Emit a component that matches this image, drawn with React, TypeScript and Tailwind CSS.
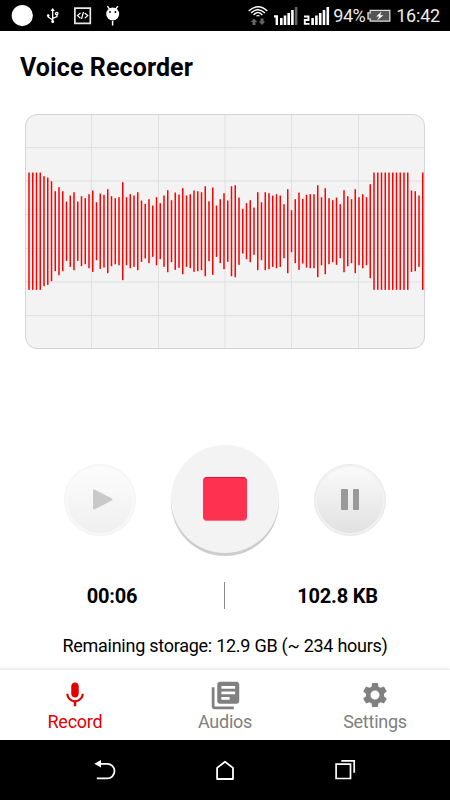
import React from 'react';
import {MdLibraryBooks, MdMic, MdSettings} from "react-icons/md";

// amplitude of every sample, 3 units per pixel above and below the center line
const samples: number[] = [
    176, 176, 176, 176, 165, 161, 150, 120, 132, 120, 89, 107, 117, 89, 105, 99, 111, 122, 87, 113,
    109, 126, 105, 99, 102, 147, 102, 111, 107, 117, 92, 82, 96, 77, 102, 84, 107, 123, 93, 116,
    110, 129, 107, 111, 122, 120, 117, 135, 90, 131, 77, 96, 114, 92, 135, 138, 101, 67, 84, 93,
    71, 117, 87, 117, 114, 107, 111, 107, 81, 126, 63, 96, 116, 97, 109, 111, 111, 138, 102, 129,
    99, 93, 101, 81, 123, 105, 96, 126, 102, 111, 102, 141, 176, 176, 176, 176, 176, 176, 176, 176,
    176, 176, 122, 120, 107, 176,
];

const tabs = [
    {name: 'Record', icon: <MdMic size={30}/>, color: "text-[#e00000]"},
    {name: 'Audios', icon: <MdLibraryBooks size={33}/>, color: "text-[#808080]"},
    {name: 'Settings', icon: <MdSettings size={30}/>, color: "text-[#808080]"},
];

function StatusBar() {
    return (
        <div className="flex h-[31px] items-center bg-black pl-[11px] pr-[10px] text-[#ececec]">
            <svg width="120" height="31" viewBox="0 0 120 31" fill="none">
                <circle cx="11.3" cy="15.6" r="10.6" fill="#fff"/>
                {/* usb */}
                <g stroke="#fff" strokeWidth="1.3">
                    <path d="M41.7 10v11M37.2 15.5v1.5l4.5 3M46 14v2.5l-4.3 2"/>
                    <path d="M41.7 8l2.2 3h-4.4z" fill="#fff" stroke="none"/>
                    <circle cx="41.7" cy="21.5" r="1.5" fill="#fff" stroke="none"/>
                    <circle cx="37.2" cy="15.5" r="1.3" fill="#fff" stroke="none"/>
                    <circle cx="45.7" cy="13.5" r="1.2"/>
                </g>
                {/* code */}
                <path d="M63.9 8.1h15.4v15.2H63.9z" stroke="#e8e8e8" strokeWidth="1.7"/>
                <path d="M69.5 13l-3 2.6 3 2.6M73.7 13l3 2.6-3 2.6M72.5 12l-2 7" stroke="#fff" strokeWidth="1.2"/>
                {/* android */}
                <circle cx="101.7" cy="14" r="6.5" fill="#fff"/>
                <path d="M96.5 6.2l2 3M106.8 6.2l-2 3M101.6 21v4.5" stroke="#fff" strokeWidth="1.5"/>
                <circle cx="99" cy="12" r=".9" fill="#000"/>
                <circle cx="104.4" cy="12" r=".9" fill="#000"/>
            </svg>
            <svg className="ml-auto" width="82" height="31" viewBox="0 0 82 31" fill="none">
                {/* wifi */}
                <path d="M.7 11Q10 2.5 19.3 11M3.1 13Q10 6.3 16.9 13M5.6 14.9Q10 10.2 14.4 14.9"
                      stroke="#fff" strokeWidth="1.4"/>
                <path d="M7.8 16.2Q10 13.7 12.2 16.2z" fill="#fff"/>
                <path d="M6 18.5l3.3 3.5H7.5v3H4.5v-3H2.7zM14 25l-3.3-3.5h1.8v-3h3v3h1.8z" fill="#666"/>
                {/* first sim */}
                <path d="M26 15.3h4V25h-2.4v-7.4H26z" fill="#fff"/>
                <path d="M32 18h2.6v7H32zM35.7 15.5h2.6V25h-2.6zM39.4 13H42v12h-2.6zM43.1 10h2.6v15h-2.6z"
                      fill="#fff"/>
                <path d="M46.8 7h2.6v18h-2.6z" fill="#666"/>
                {/* second sim */}
                <path d="M56 16.5h4.5v3.5h-3.7v3.9h4.7" stroke="#fff" strokeWidth="1.9"/>
                <path
                    d="M63.3 18h2.6v7h-2.6zM67.1 15.5h2.6V25h-2.6zM70.9 13h2.6v12h-2.6zM74.7 10h2.6v15h-2.6zM78.5 7h2.6v18h-2.6z"
                    fill="#fff"/>
            </svg>
            <span className="ml-[3.5px] w-[34px] text-[18px] tracking-[-0.4px] whitespace-nowrap">94%</span>
            <svg width="24" height="31" viewBox="0 0 24 31">
                <path d="M3.2 10.3h19.6v10.9H3.2v-2.4H1v-6h2.2z" fill="#555" stroke="#ddd" strokeWidth="1.3"/>
                <path d="M14.5 11.5l-5.3 5h3l-2 3.7 6.3-5h-3.3z" fill="#fff"/>
            </svg>
            <span className="ml-[5px] text-[18px] tracking-[-0.2px]">16:42</span>
        </div>
    );
}

function Waveform() {
    return (
        <div className="mx-[25px] mt-[9px] h-[235px] overflow-hidden rounded-xl border border-[#d4d4d4] bg-[#f3f3f3]">
            <svg width="398" height="233" viewBox="26 115 398 233">
                {[91.5, 158.5, 225, 291.5, 358.5].map((x) => (
                    <path key={x} d={`M${x} 115v233`} stroke="#e0e0e0"/>
                ))}
                {[147.5, 181, 214.5, 248.5, 282, 315.5].map((y) => (
                    <path key={y} d={`M26 ${y}h398`} stroke="#e0e0e0"/>
                ))}
                {samples.map((sample, index) => (
                    <rect key={index} x={28.25 + index * 3.75} y={231.2 - sample / 3} width="1.5"
                          height={sample / 1.5} fill="#ff0000"/>
                ))}
            </svg>
        </div>
    );
}

function Controls() {
    return (
        <div className="mt-[95px] flex h-28 items-center justify-center gap-[35px]">
            <button
                className="flex size-[72px] items-center justify-center rounded-full border border-[#f4f4f4] bg-linear-to-b from-[#fdfdfd] to-[#efefef] shadow-[inset_0_0_0_2px_#f9f9f9]">
                <svg className="ml-1.5" width="22" height="22" viewBox="0 0 22 22">
                    <path d="M2 1.5v18l17.5-9z" fill="#c9c9c9" stroke="#c9c9c9" strokeWidth="2"
                          strokeLinejoin="round"/>
                </svg>
            </button>
            <button
                className="mb-[3px] flex size-[108px] items-center justify-center rounded-full bg-[#f3f3f3] shadow-[0_3px_0_#cccccc]">
                <span
                    className="size-11 rounded-[4px] border-y border-t-[#e0103c] border-b-[#ff7088] bg-[#ff3150]"></span>
            </button>
            <button
                className="flex size-[72px] items-center justify-center gap-[5px] rounded-full border border-[#e9e9e9] bg-linear-to-b from-[#fbfbfb] to-[#e0e0e0] shadow-[inset_0_0_0_2px_#f2f2f2]">
                <span className="mb-px h-[21px] w-[6.5px] rounded-[1px] bg-[#999999]"></span>
                <span className="mb-px h-[21px] w-[6.5px] rounded-[1px] bg-[#999999]"></span>
            </button>
        </div>
    );
}

function App() {
    return (
        <div className="flex h-[800px] w-[450px] flex-col bg-white font-['Roboto',sans-serif] text-black">
            <StatusBar/>
            <h1 className="h-[74px] pl-5 pt-[19px] text-[25px] leading-9 font-bold tracking-[0.1px]">Voice Recorder</h1>
            <Waveform/>
            <Controls/>
            <div className="mt-[25px] flex h-7 items-center text-center text-[20px] font-bold tracking-[-0.2px]">
                <span className="w-[224px] pt-0.5">00:06</span>
                <span className="h-[27px] w-px bg-[#888888]"></span>
                <span className="flex-1 pt-0.5">102.8 KB</span>
            </div>
            <p className="mt-[25px] text-center text-[18px] leading-6 tracking-[-0.26px] whitespace-nowrap">Remaining
                storage: 12.9 GB (~ 234 hours)</p>
            <nav
                className="mt-auto grid h-[71px] grid-cols-3 border-t border-[#eeeeee] shadow-[0_-1px_2px_rgba(0,0,0,0.08)]">
                {tabs.map((tab) => (
                    <div key={tab.name} className={`flex flex-col items-center ${tab.color}`}>
                        <div className="flex h-10 items-center pt-2.5">{tab.icon}</div>
                        <span className="text-[18px] leading-6 tracking-[-0.25px]">{tab.name}</span>
                    </div>
                ))}
            </nav>
            <div className="flex h-[60px] items-center justify-center gap-24 bg-black">
                <svg width="24" height="24" viewBox="0 0 24 24" fill="none" stroke="#fff" strokeWidth="1.8">
                    <path d="M6 5.8h8.2a7.3 7.3 0 0 1 0 14.6H3.8"/>
                    <path d="M1.3 5.8L8 2v7.6z" fill="#fff" stroke="none"/>
                </svg>
                <svg width="24" height="24" viewBox="0 0 24 24" fill="none" stroke="#fff" strokeWidth="1.8">
                    <path d="M4.1 21V9.9L12 3.7l8 6.2V21z" strokeLinejoin="round"/>
                </svg>
                <svg width="24" height="24" viewBox="0 0 24 24" fill="none" stroke="#fff" strokeWidth="1.7">
                    <path d="M3.1 6.1h14.4v14.4H3.1z"/>
                    <path d="M8.3 2.8h12.9v11.9"/>
                </svg>
            </div>
        </div>
    );
}

export default App;
